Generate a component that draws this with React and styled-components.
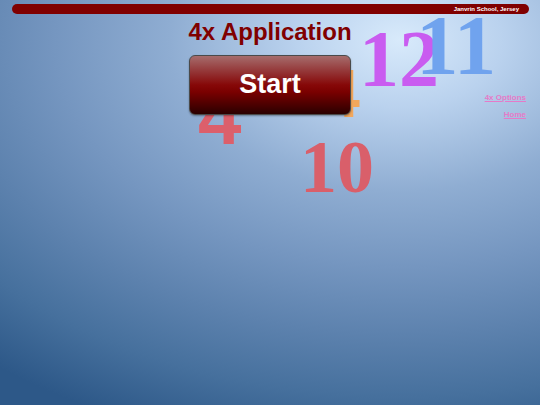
import React from "react";
import styled, { createGlobalStyle } from "styled-components";

const Global = createGlobalStyle`
  html, body { margin: 0; padding: 0; }
  body { font-family: "Liberation Sans", Arial, sans-serif; }
`;

const Page = styled.div`
  position: relative;
  width: 540px;
  height: 405px;
  overflow: hidden;
  background: radial-gradient(
    640px 420px at 400px 40px,
    #d8eafb 0%,
    #bad2ee 16%,
    #8fadd2 36%,
    #7596c0 54%,
    #5d82ae 70%,
    #46709d 85%,
    #2d5888 100%
  );
`;

const Header = styled.header`
  position: relative;
  z-index: 2;
  display: flex;
  justify-content: flex-end;
  align-items: center;
  height: 10px;
  margin: 4px 11px 0 12px;
  padding-right: 10px;
  border-radius: 5px;
  background: #800000;
`;

const SchoolName = styled.span`
  font-size: 6px;
  font-weight: bold;
  color: #ffffff;
  line-height: 10px;
`;

const Main = styled.main`
  position: relative;
  z-index: 2;
  display: grid;
  grid-template-columns: 1fr auto 1fr;
  margin-top: 4px;
`;

const Center = styled.div`
  display: flex;
  flex-direction: column;
  align-items: center;
`;

const Title = styled.h1`
  margin: 0;
  font-size: 24px;
  font-weight: bold;
  color: #800000;
  line-height: 27.6px;
`;

const StartButton = styled.button`
  width: 162px;
  height: 60px;
  margin-top: 9px;
  border: 1px solid #4a4a4a;
  border-radius: 6px;
  background: linear-gradient(
    #a66c6c 0%,
    #95393a 25%,
    #860808 50%,
    #7a0000 62%,
    #2a0000 100%
  );
  box-shadow: 0 1px 2px rgba(0, 0, 0, 0.35);
  font-family: "Liberation Sans", Arial, sans-serif;
  font-size: 27px;
  font-weight: bold;
  color: #ffffff;
  cursor: pointer;
`;

const Nav = styled.nav`
  display: flex;
  flex-direction: column;
  align-items: flex-end;
  gap: 7px;
  padding: 75px 14px 0 0;
`;

const NavLink = styled.a`
  font-size: 8px;
  font-weight: bold;
  line-height: 10px;
  color: #e67ac8;
  text-decoration: underline;
`;

const FloatNum = styled.span`
  position: absolute;
  z-index: 1;
  left: ${(p) => p.$x}px;
  top: ${(p) => p.$y}px;
  font-family: ${(p) =>
    p.$serif
      ? '"Liberation Serif", "Times New Roman", serif'
      : '"Liberation Sans", Arial, sans-serif'};
  font-size: ${(p) => p.$size}px;
  font-weight: bold;
  line-height: 1;
  color: ${(p) => p.$color};
  white-space: nowrap;
`;

const numbers = [
  { t: "4", x: 322, y: 59, size: 68, color: "#f2a75c", serif: false },
  { t: "4", x: 198, y: 78, size: 78, color: "#dc5f6b", serif: false },
  { t: "10", x: 300, y: 130, size: 74, color: "#d95f6a", serif: true },
  { t: "12", x: 359, y: 19, size: 80, color: "#c95cf0", serif: true },
  { t: "11", x: 416, y: 3, size: 85, color: "#70a3ee", serif: true },
];

export default function App() {
  return (
    <>
      <Global />
      <Page>
        {numbers.map((n, i) => (
          <FloatNum
            key={i}
            $x={n.x}
            $y={n.y}
            $size={n.size}
            $color={n.color}
            $serif={n.serif}
          >
            {n.t}
          </FloatNum>
        ))}
        <Header>
          <SchoolName>Janvrin School, Jersey</SchoolName>
        </Header>
        <Main>
          <div />
          <Center>
            <Title>4x Application</Title>
            <StartButton>Start</StartButton>
          </Center>
          <Nav>
            <NavLink href="#">4x Options</NavLink>
            <NavLink href="#">Home</NavLink>
          </Nav>
        </Main>
      </Page>
    </>
  );
}
